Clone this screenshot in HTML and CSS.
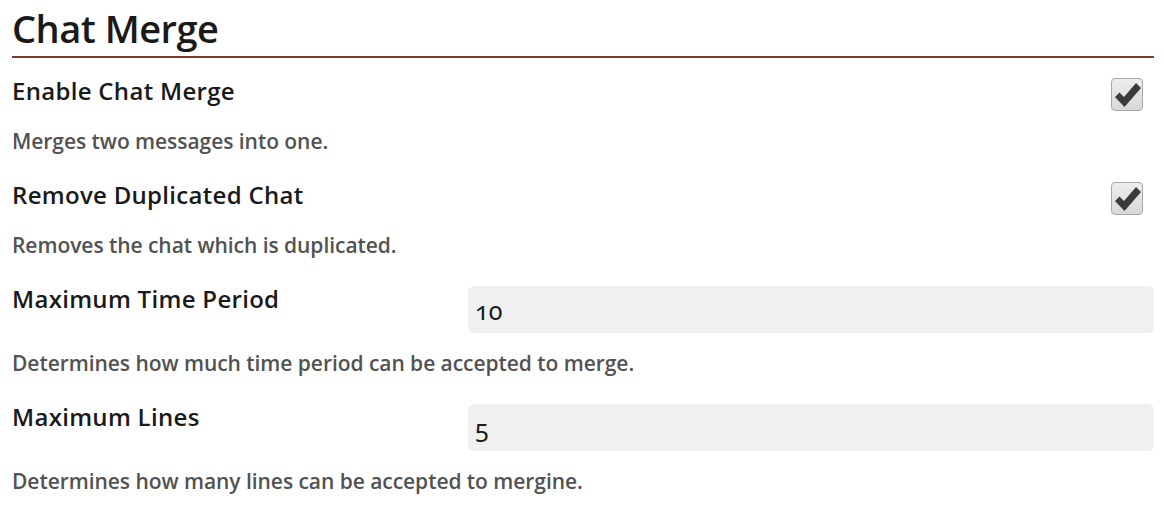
FILE: index.html
```html
<!DOCTYPE html>
<html lang="en">
<head>
<meta charset="utf-8">
<title>Chat Merge</title>
<link rel="stylesheet" href="styles.css">
</head>
<body>
<section class="panel">
  <h1 class="panel-title">Chat Merge</h1>

  <div class="setting">
    <div class="setting-row">
      <label class="setting-label">Enable Chat Merge</label>
      <span class="checkbox checked">
        <svg viewBox="0 0 26 24" width="26" height="24"><path d="M0 14 L4.5 9.5 L9 14 L21 0 L26 5 L9.5 24 Z" fill="#3b3b3b"/></svg>
      </span>
    </div>
    <p class="setting-desc">Merges two messages into one.</p>
  </div>

  <div class="setting">
    <div class="setting-row">
      <label class="setting-label">Remove Duplicated Chat</label>
      <span class="checkbox checked">
        <svg viewBox="0 0 26 24" width="26" height="24"><path d="M0 14 L4.5 9.5 L9 14 L21 0 L26 5 L9.5 24 Z" fill="#3b3b3b"/></svg>
      </span>
    </div>
    <p class="setting-desc">Removes the chat which is duplicated.</p>
  </div>

  <div class="setting">
    <div class="setting-row">
      <label class="setting-label">Maximum Time Period</label>
      <input class="text-input" type="text" value="10">
    </div>
    <p class="setting-desc">Determines how much time period can be accepted to merge.</p>
  </div>

  <div class="setting">
    <div class="setting-row">
      <label class="setting-label">Maximum Lines</label>
      <input class="text-input" type="text" value="5">
    </div>
    <p class="setting-desc">Determines how many lines can be accepted to mergine.</p>
  </div>
</section>
</body>
</html>
```

FILE: styles.css
```css
html, body {
  margin: 0;
  padding: 0;
  background: #ffffff;
}

body {
  font-family: "Open Sans", "Noto Sans", sans-serif;
  color: #1a1a1a;
}

.panel {
  padding: 0 10px 0 12px;
}

.panel-title {
  margin: 0 0 18px;
  padding: 5px 0 5px;
  font-size: 38px;
  font-weight: 600;
  line-height: 46px;
  letter-spacing: -0.5px;
  border-bottom: 2px solid #7b3a2c;
}

.setting {
  display: flex;
  flex-direction: column;
  padding-bottom: 26px;
}

.setting-row {
  display: flex;
  justify-content: space-between;
  align-items: flex-start;
}

.setting-label {
  font-size: 24px;
  line-height: 30px;
  font-weight: 600;
  letter-spacing: 0.3px;
}

.setting-desc {
  margin: 17px 0 0;
  font-size: 21px;
  line-height: 26px;
  font-weight: 600;
  color: #525252;
  letter-spacing: -0.05px;
}

.checkbox {
  box-sizing: border-box;
  width: 32px;
  height: 33px;
  margin: 2px 11px 0 0;
  padding: 0 0 0 2.5px;
  border: 1.5px solid #a8a8a8;
  border-radius: 4px;
  background: linear-gradient(#ededed, #d8d8d8);
  display: flex;
  align-items: center;
  justify-content: flex-start;
}

.text-input {
  box-sizing: border-box;
  width: 686px;
  height: 47px;
  margin-top: 2px;
  border: none;
  border-radius: 6px;
  background: #f0f0f0;
  padding: 1px 7px 0;
  font-family: "Noto Sans", serif;
  font-variant-numeric: oldstyle-nums;
  font-size: 25px;
  color: #1a1a1a;
  outline: none;
}
```
